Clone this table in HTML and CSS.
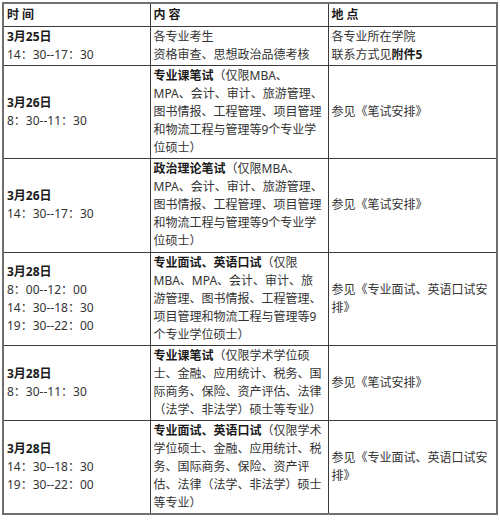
FILE: index.html
```html
<!DOCTYPE html>
<html lang="zh-CN">
<head>
<meta charset="utf-8">
<title>考试安排</title>
<link rel="stylesheet" href="styles.css">
</head>
<body>
<table class="schedule">
  <colgroup>
    <col class="c-time">
    <col class="c-content">
    <col class="c-place">
  </colgroup>
  <thead>
    <tr>
      <th>时 间</th>
      <th>内 容</th>
      <th>地 点</th>
    </tr>
  </thead>
  <tbody>
    <tr>
      <td><b>3月25日</b><br>14：30--17：30</td>
      <td>各专业考生<br>资格审查、思想政治品德考核</td>
      <td>各专业所在学院<br>联系方式见<b>附件5</b></td>
    </tr>
    <tr>
      <td><b>3月26日</b><br>8：30--11：30</td>
      <td><b>专业课笔试</b>（仅限MBA、<br>MPA、会计、审计、旅游管理、<br>图书情报、工程管理、项目管理<br>和物流工程与管理等9个专业学<br>位硕士）</td>
      <td>参见《笔试安排》</td>
    </tr>
    <tr class="tall">
      <td><b>3月26日</b><br>14：30--17：30</td>
      <td><b>政治理论笔试</b>（仅限MBA、<br>MPA、会计、审计、旅游管理、<br>图书情报、工程管理、项目管理<br>和物流工程与管理等9个专业学<br>位硕士）</td>
      <td>参见《笔试安排》</td>
    </tr>
    <tr>
      <td><b>3月28日</b><br>8：00--12：00<br>14：30--18：30<br>19：30--22：00</td>
      <td><b>专业面试、英语口试</b>（仅限<br>MBA、MPA、会计、审计、旅<br>游管理、图书情报、工程管理、<br>项目管理和物流工程与管理等9<br>个专业学位硕士）</td>
      <td>参见《专业面试、英语口试安<br>排》</td>
    </tr>
    <tr>
      <td><b>3月28日</b><br>8：30--11：30</td>
      <td><b>专业课笔试</b>（仅限学术学位硕<br>士、金融、应用统计、税务、国<br>际商务、保险、资产评估、法律<br>（法学、非法学）硕士等专业）</td>
      <td>参见《笔试安排》</td>
    </tr>
    <tr>
      <td><b>3月28日</b><br>14：30--18：30<br>19：30--22：00</td>
      <td><b>专业面试、英语口试</b>（仅限学术<br>学位硕士、金融、应用统计、税<br>务、国际商务、保险、资产评<br>估、法律（法学、非法学）硕士<br>等专业）</td>
      <td>参见《专业面试、英语口试安<br>排》</td>
    </tr>
  </tbody>
</table>
</body>
</html>
```
FILE: styles.css
```css
html, body {
  margin: 0;
  padding: 0;
  background: #ffffff;
}

body {
  padding: 2px;
  font-family: "Noto Sans", "Noto Sans CJK SC", sans-serif;
  font-size: 12px;
  color: #333333;
}

.schedule {
  width: 494px;
  border-collapse: collapse;
  border: 2px solid #6f6f6f;
  table-layout: fixed;
}

.c-time { width: 147px; }
.c-content { width: 178px; }
.c-place { width: 169px; }

.schedule th,
.schedule td {
  border: 1px solid #3a3a3a;
  padding: 1px 3px 1px;
  line-height: 18px;
  text-align: left;
  vertical-align: middle;
  white-space: nowrap;
}

.schedule th {
  padding: 2px 3px 2px;
  font-weight: bold;
  color: #1a1a1a;
}

.schedule b {
  color: #1a1a1a;
}

.tall td {
  padding-top: 1px;
  padding-bottom: 2px;
}
```
